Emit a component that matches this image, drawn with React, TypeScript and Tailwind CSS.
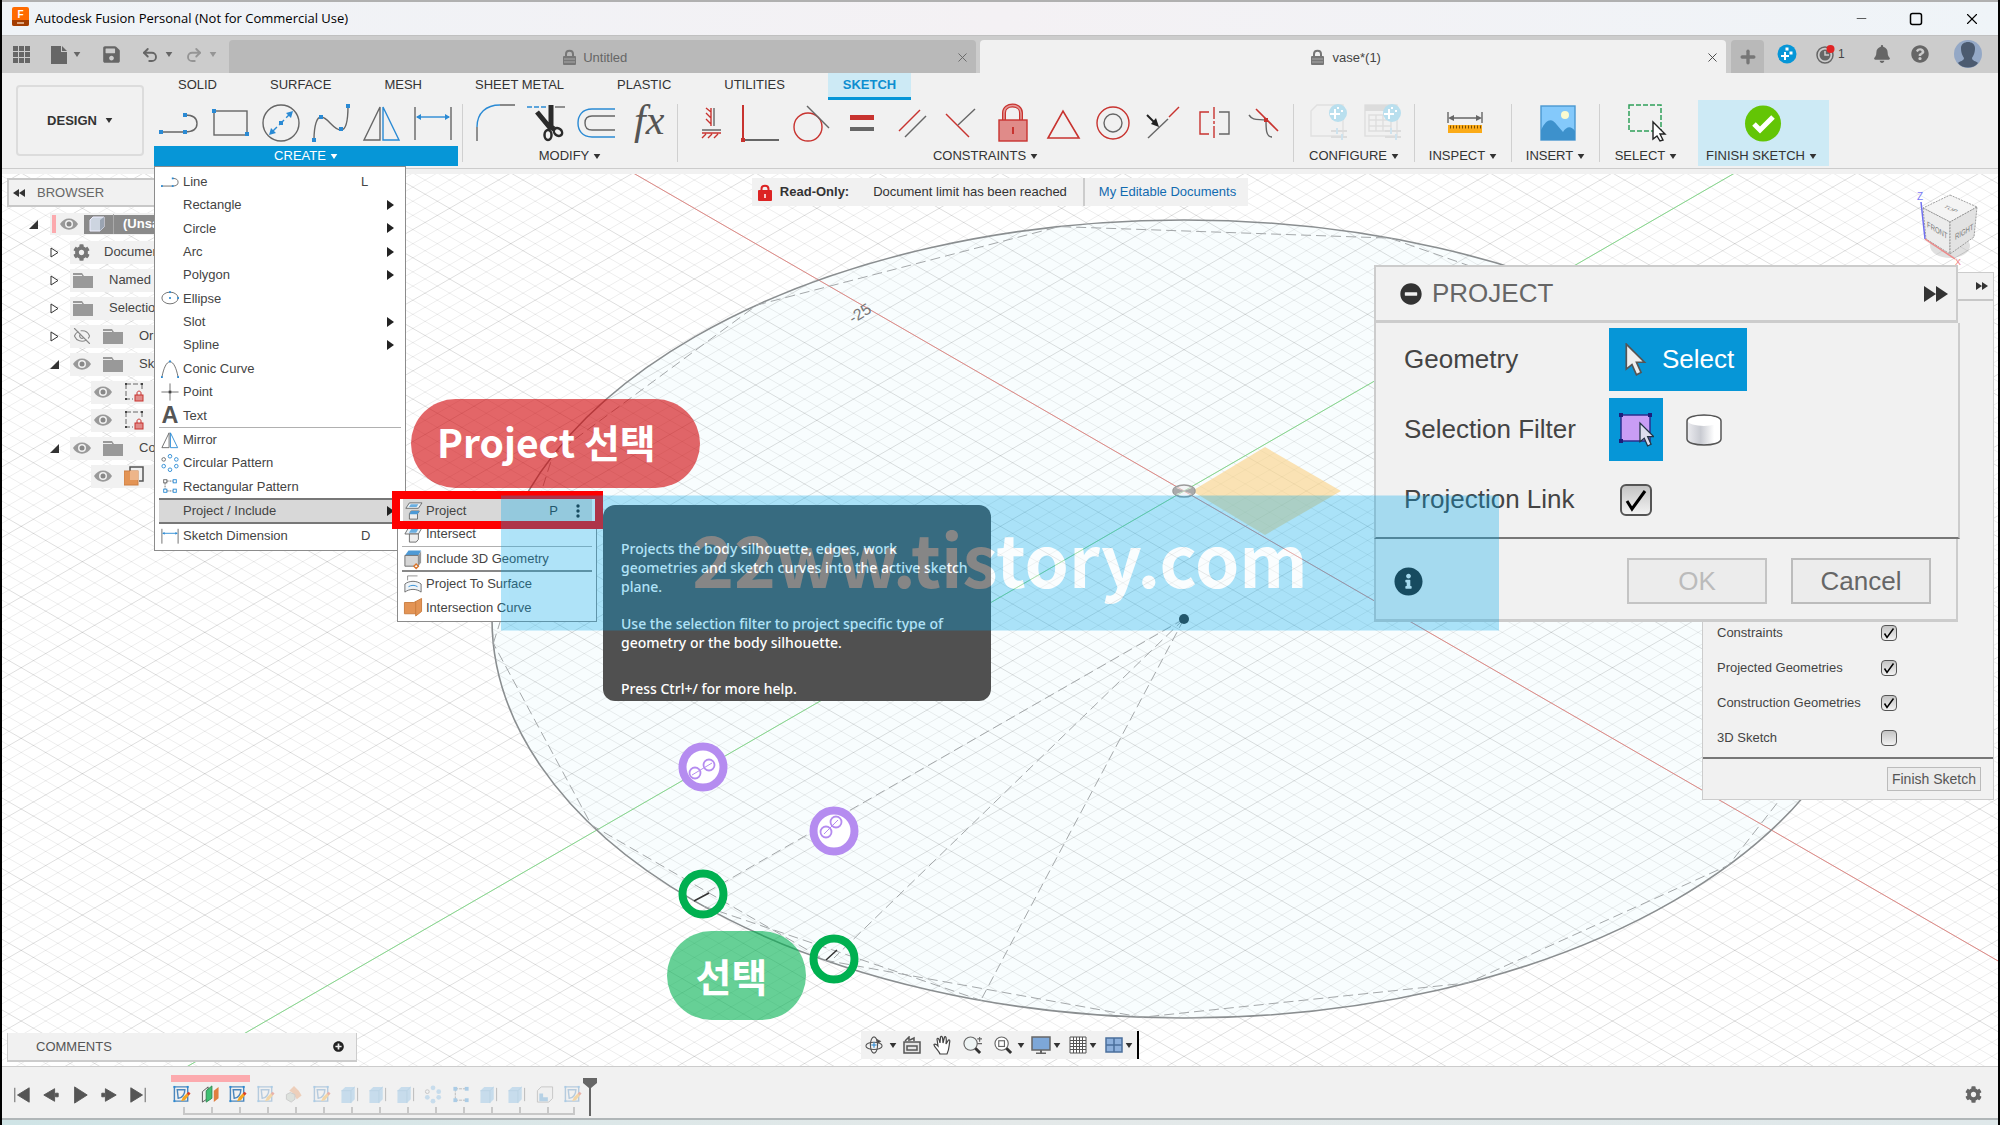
import { ReactNode } from "react";
import { Check, EyeOff, Minus, Plus, Redo2, Undo2, X } from "lucide-react";
import { FaBell, FaCog, FaInfoCircle, FaMinusCircle, FaPlusCircle, FaQuestionCircle, FaSave } from "react-icons/fa";

const BLUE = "#2a8ad4";
const RED = "#c8332f";
const GRAY = "#666";

function Caret({ className = "" }: { className?: string }) {
  return (
    <svg viewBox="0 0 8 6" className={"h-[5px] w-[8px] shrink-0 " + className}>
      <path d="M0 0H8L4 6Z" fill="currentColor" />
    </svg>
  );
}

function FastForward({ className = "" }: { className?: string }) {
  return (
    <svg viewBox="0 0 24 16" className={className}>
      <path d="M0 0L12 8L0 16ZM12 0L24 8L12 16Z" fill="#333" />
    </svg>
  );
}

function Icon({ children }: { children: ReactNode }) {
  return (
    <svg viewBox="0 0 40 40" className="size-10 overflow-visible" fill="none" stroke={GRAY} strokeWidth="1.4">
      {children}
    </svg>
  );
}

function Dots({ points, color = BLUE, r = 2 }: { points: number[][]; color?: string; r?: number }) {
  return (
    <>
      {points.map(([x, y]) => (
        <rect key={x + "-" + y} x={x - r} y={y - r} width={r * 2} height={r * 2} fill={color} stroke="none" />
      ))}
    </>
  );
}

/* ---------- ribbon icons ---------- */

const LineIcon = (
  <>
    <path d="M2 29H26M26 12C34 12 38 15 38 20.500S34 29 26 29" />
    <Dots points={[[2, 29], [26, 29], [26, 12]]} />
  </>
);
const MirrorIcon = (
  <>
    <path d="M18 4V37H2Z" />
    <path d="M21 4V37H37Z" stroke={BLUE} />
  </>
);
const DimensionIcon = (
  <>
    <path d="M2 4V37M38 4V37" />
    <path d="M4 14H36" stroke={BLUE} />
    <path d="M3 14L8 11V17ZM37 14L32 11V17Z" fill={BLUE} stroke="none" />
  </>
);

const createIcons: ReactNode[] = [
  LineIcon,
  <>
    <rect x="4" y="8" width="33" height="24" />
    <Dots points={[[4, 8], [37, 31]]} />
  </>,
  <>
    <circle cx="20" cy="20" r="18" />
    <path d="M11 29L30 10" stroke={BLUE} strokeDasharray="7 3" />
    <path d="M8 32L10 25L15 30ZM32 8L30 15L25 10Z" fill={BLUE} stroke="none" />
    <Dots points={[[20, 20]]} />
  </>,
  <>
    <path d="M3 37C3 22 6 14 10 14C17 14 22 27 30 27C36 27 37 14 37 3" />
    <Dots points={[[3, 37], [10, 14], [30, 26], [37, 3]]} />
  </>,
  MirrorIcon,
  DimensionIcon,
];

const modifyIcons: ReactNode[] = [
  <>
    <path d="M1 24C1 10 10 2 24 2" stroke={BLUE} />
    <path d="M1 24V38M24 2H39" />
  </>,
  <>
    <path d="M0 4H20" stroke={BLUE} strokeDasharray="5 2" />
    <path d="M28 4H38" />
    <path d="M10 9L24 26M24 2V26" stroke="#2b2b2b" strokeWidth="5" />
    <path d="M22 23L27 26" stroke="#2b2b2b" strokeWidth="5" />
    <ellipse cx="21" cy="32" rx="3.500" ry="5" stroke="#2b2b2b" strokeWidth="2.500" />
    <ellipse cx="31" cy="29" rx="3.500" ry="4.500" transform="rotate(-50 31 29)" stroke="#2b2b2b" strokeWidth="2.500" />
  </>,
  <>
    <path d="M38 6H15C5 6 1 13 1 20S5 34 15 34H38" stroke={BLUE} />
    <path d="M38 13H15C10 13 8 16 8 20S10 27 15 27H38" />
  </>,
  <text x="6" y="31" fontFamily="Liberation Serif, serif" fontStyle="italic" fontSize="42" fill="#555" stroke="none">
    fx
  </text>,
];

const constraintIcons: ReactNode[] = [
  <>
    <path d="M23 5V23M11 27H30" />
    <path d="M20 5V23M11 30H30M20 9L15 5M20 15L15 10M20 21L15 16M11 35L15 31M17 35L21 31M23 35L27 31" stroke={RED} />
  </>,
  <>
    <path d="M2 2V36" stroke={RED} strokeWidth="2" />
    <path d="M4 37H38" strokeWidth="2" />
    <Dots points={[[2, 37]]} color={RED} />
  </>,
  <>
    <circle cx="16" cy="24" r="14" stroke={RED} />
    <path d="M15 3L37 25" />
  </>,
  <>
    <rect x="8" y="12" width="24" height="5" fill={RED} stroke="none" />
    <rect x="8" y="24" width="24" height="4" fill={GRAY} stroke="none" />
  </>,
  <>
    <path d="M7 28L28 7" stroke={RED} />
    <path d="M13 34L34 13" />
  </>,
  <>
    <path d="M4 11L27 34" stroke={RED} />
    <path d="M16 22L33 6" />
  </>,
  <>
    <path d="M11 18V10C11 0 28 0 28 10V18" stroke={RED} strokeWidth="4" />
    <path d="M11 18V10C11 0 28 0 28 10V18" stroke="#e59a98" strokeWidth="1.500" />
    <rect x="6" y="17" width="28" height="21" fill="#e08b89" stroke={RED} />
    <path d="M20 24V31" stroke={RED} strokeWidth="2" />
  </>,
  <path d="M5 35H36L20 8Z" stroke={RED} strokeWidth="1.600" />,
  <>
    <circle cx="20" cy="20" r="16" stroke={RED} />
    <circle cx="20" cy="20" r="9" />
  </>,
  <>
    <path d="M5 35L25 16" />
    <path d="M26 14L36 4" stroke={RED} />
    <path d="M4 12L12 20" stroke="#222" strokeWidth="2" />
    <path d="M16 24L8 21L13 15Z" fill="#222" stroke="none" />
  </>,
  <>
    <path d="M15 9H6V31H15" stroke={RED} />
    <path d="M25 9H35V31H25" />
    <path d="M20 4V36" stroke={RED} strokeDasharray="12 2 3 2" />
  </>,
  <>
    <path d="M5 12C9 18 13 16 22 17C22 26 22 34 28 34" />
    <path d="M12 6L34 28" stroke={RED} strokeWidth="1.600" />
    <Dots points={[[22, 17]]} color={RED} />
  </>,
];

const badge = (
  <>
    <circle cx="29" cy="10" r="9" fill="#b9dfee" stroke="none" />
    <path d="M26 6V16M21 11H31" stroke="#fff" strokeWidth="2" />
    <Dots points={[[29, 5], [33, 8]]} color="#fff" r={1} />
    <path d="M22 28H38M22 34H38" stroke="#dcdcdc" strokeWidth="2" />
    <path d="M28 25V31M33 31V37" stroke="#cfe3ee" strokeWidth="2" />
  </>
);
const configureIcons: ReactNode[] = [
  <>
    <path d="M2 8L8 2H34V33H2Z" stroke="#e0e0e0" />
    {badge}
  </>,
  <>
    <rect x="2" y="2" width="32" height="31" stroke="#dedede" />
    <path d="M2 5H34" stroke="#dcdcdc" strokeWidth="6" />
    <path d="M6 12H28V28H6ZM6 17H28M6 23H28M13 12V28M20 12V28" stroke="#dedede" />
    {badge}
  </>,
];

const inspectIcon = (
  <>
    <path d="M3 9V20M37 9V20M5 15H35" />
    <path d="M3 15L9 12V18ZM37 15L31 12V18Z" fill={GRAY} stroke="none" />
    <rect x="3" y="22" width="34" height="8" fill="#fbab18" stroke="none" />
    <path d="M5 24H36" stroke="#7a4d00" strokeWidth="3" strokeDasharray="1 2" />
  </>
);
const insertIcon = (
  <>
    <rect x="3" y="3" width="34" height="34" fill="#84c9fb" stroke="#4a98d0" />
    <path d="M3 27C9 15 14 15 19 22L25 29C29 23 33 23 37 28V37H3Z" fill="#3d91cc" stroke="none" />
    <circle cx="27" cy="12" r="4" fill="#fbfbd0" stroke="none" />
  </>
);
const selectIcon = (
  <>
    <rect x="1" y="2" width="32" height="26" stroke="#2fa05a" strokeWidth="1.500" strokeDasharray="5 2" />
    <path d="M25 19V36L29 33L32 38L35 37L32 31H37Z" fill="#fff" stroke="#222" />
  </>
);
const finishIcon = (
  <>
    <circle cx="19" cy="20.500" r="18" fill="#63c505" stroke="none" />
    <path d="M10 21L16 27L29 14" stroke="#fff" strokeWidth="5" />
  </>
);

/* ---------- ribbon ---------- */

function ToolGroup({ label, width, icons, active }: { label: string; width: string; icons: ReactNode[]; active?: boolean }) {
  return (
    <div className={"flex flex-col pt-[3px] " + width}>
      <div className="flex justify-around">
        {icons.map((icon, i) => (
          <button key={i} aria-label={label + " tool " + (i + 1)}>
            <Icon>{icon}</Icon>
          </button>
        ))}
      </div>
      <button
        className={
          "mt-[3px] flex h-5 items-center justify-center gap-1 whitespace-nowrap " +
          (active ? "bg-[#0696d7] text-white" : "pr-1 text-[#333]")
        }
      >
        {label}
        <Caret />
      </button>
    </div>
  );
}

function Divider() {
  return <div className="mt-1 mr-2 mb-1 ml-1 w-px bg-[#d0d0d0]" />;
}

const tabs = ["SOLID", "SURFACE", "MESH", "SHEET METAL", "PLASTIC", "UTILITIES"];

function Ribbon() {
  return (
    <div className="relative z-20 flex h-[96px] border-b border-[#ccc] bg-[#f1f1f1] text-[#333]">
      <button className="mt-3 ml-[14px] flex h-[71px] w-32 shrink-0 items-center justify-center gap-2 rounded border-2 border-[#dcdcdc] font-bold">
        DESIGN <Caret />
      </button>
      <div className="ml-2.5 flex flex-col">
        <div className="flex h-[27px] items-start pl-6 text-[13px]">
          {tabs.map((t) => (
            <button key={t} className="mr-[53px] h-6 whitespace-nowrap">
              {t}
            </button>
          ))}
          <button className="-ml-2.5 h-[27px] w-[83px] border-b-[3px] border-[#0696d7] bg-[#cdeaf5] font-bold text-[#0d8ed0]">
            SKETCH
          </button>
        </div>
        <div className="flex">
          <div className="relative">
            <ToolGroup label="CREATE" width="w-[304px]" icons={createIcons} active />
            <CreateMenu />
          </div>
          <Divider />
          <ToolGroup label="MODIFY" width="w-[202px]" icons={modifyIcons} />
          <Divider />
          <ToolGroup label="CONSTRAINTS" width="w-[603px]" icons={constraintIcons} />
          <Divider />
          <ToolGroup label="CONFIGURE" width="w-[108px]" icons={configureIcons} />
          <Divider />
          <ToolGroup label="INSPECT" width="w-[84px]" icons={[inspectIcon]} />
          <Divider />
          <ToolGroup label="INSERT" width="w-[75px]" icons={[insertIcon]} />
          <Divider />
          <ToolGroup label="SELECT" width="w-20" icons={[selectIcon]} />
          <div className="ml-2.5 bg-[#cdeaf5]">
            <ToolGroup label="FINISH SKETCH" width="w-[131px]" icons={[finishIcon]} />
          </div>
        </div>
      </div>
    </div>
  );
}

/* ---------- create menu ---------- */

type Item = { label: string; icon?: ReactNode; sub?: boolean };

const drawItems: Item[] = [
  { label: "Line", icon: LineIcon },
  { label: "Rectangle", sub: true },
  { label: "Circle", sub: true },
  { label: "Arc", sub: true },
  { label: "Polygon", sub: true },
  {
    label: "Ellipse",
    icon: (
      <>
        <ellipse cx="20" cy="20" rx="18" ry="13" strokeWidth="2" />
        <Dots points={[[20, 20], [20, 7], [38, 20]]} r={2} />
      </>
    ),
  },
  { label: "Slot", sub: true },
  { label: "Spline", sub: true },
  {
    label: "Conic Curve",
    icon: (
      <>
        <path d="M2 38C6 18 12 4 20 4S34 18 38 38" strokeWidth="2" />
        <Dots points={[[20, 3], [2, 38], [38, 38]]} r={2} />
      </>
    ),
  },
  {
    label: "Point",
    icon: (
      <>
        <path d="M20 1V39M1 20H39" strokeWidth="2" />
        <Dots points={[[20, 20]]} color="#444" r={3} />
      </>
    ),
  },
  {
    label: "Text",
    icon: (
      <text x="20" y="38" textAnchor="middle" fontFamily="Liberation Sans, sans-serif" fontWeight="bold" fontSize="52" fill="#555" stroke="none">
        A
      </text>
    ),
  },
];

const patternItems: Item[] = [
  { label: "Mirror", icon: <g strokeWidth="2">{MirrorIcon}</g> },
  {
    label: "Circular Pattern",
    icon: (
      <g stroke={BLUE} strokeWidth="2">
        <ellipse cx="20" cy="5" rx="4" ry="4" />
        <circle cx="34" cy="12" r="4" />
        <circle cx="34" cy="27" r="4" />
        <circle cx="20" cy="35" r="4" />
        <circle cx="6" cy="27" r="4" />
        <circle cx="6" cy="12" r="4" stroke={GRAY} />
      </g>
    ),
  },
  {
    label: "Rectangular Pattern",
    icon: (
      <g strokeWidth="2" stroke={BLUE}>
        <path d="M13 9H27M9 13V27M13 31H27" stroke={GRAY} strokeDasharray="4 2" />
        <rect x="6" y="6" width="7" height="7" stroke={GRAY} />
        <rect x="27" y="6" width="7" height="7" />
        <rect x="6" y="27" width="7" height="7" />
        <rect x="27" y="27" width="7" height="7" />
      </g>
    ),
  },
];

function MenuIcon({ children }: { children?: ReactNode }) {
  return (
    <svg viewBox="0 0 40 40" className="size-[18px] shrink-0 overflow-visible" fill="none" stroke={GRAY} strokeWidth="2">
      {children}
    </svg>
  );
}

function MenuRow({ item, shortcut }: { item: Item; shortcut?: string }) {
  return (
    <button className="flex flex-1 items-center gap-1 pr-[11px] pl-1.5 text-left">
      <MenuIcon>{item.icon}</MenuIcon>
      <span className="flex-1 whitespace-nowrap">{item.label}</span>
      {shortcut && <span className="w-[33px]">{shortcut}</span>}
      {item.sub && (
        <svg viewBox="0 0 7 10" className="h-2.5 w-[7px]">
          <path d="M0 0L7 5L0 10Z" fill="#222" />
        </svg>
      )}
    </button>
  );
}

const projectIcon = (
  <>
    <path d="M12 2H40L32 14H4Z" fill="#eef3f7" />
    <path d="M15 5H32L28 11H11Z" fill="#6aaee0" stroke="none" />
    <path d="M16 20H34L30 26V38H12V26Z" fill="#eee" />
    <path d="M16 20H34L30 27H12Z" fill="#4d9ad6" stroke="none" />
  </>
);
const intersectIcon = (
  <>
    <path d="M10 6H40L32 20H2Z" fill="#eef3f7" />
    <path d="M16 9H32L27 17H11Z" fill="#6aaee0" stroke="none" />
    <path d="M12 20H32V32L27 38H12Z" fill="#eee" />
  </>
);
const includeIcon = (
  <>
    <path d="M2 12L10 1H38L32 12Z" fill="#4d9ad6" stroke="none" />
    <path d="M2 12H32V36H2Z" fill="#d6d6d6" />
    <path d="M32 12L38 2V28L32 36Z" fill="#999" stroke="none" />
    <path d="M27 31L32 36L27 41L22 36Z" fill="#fff" stroke="#d9742b" strokeWidth="3" />
  </>
);
const surfaceIcon = (
  <>
    <path d="M8 12V2H30" strokeWidth="1.500" />
    <path d="M2 20C12 12 28 12 38 20V38C28 30 12 30 2 38Z" fill="#eef3f7" />
    <path d="M10 26C16 22 24 22 30 26" stroke={BLUE} />
  </>
);
const curveIcon = <path d="M1 10H22L39 1V30L26 40V35H1ZM26 8V36" fill="#e39455" stroke="#c87a3c" />;

function CreateMenu() {
  return (
    <div className="absolute top-full left-0 flex w-[252px] flex-col border border-[#8c8c8c] bg-white pt-[3px] pb-0.5 text-[13px] text-[#444]">
      <div className="flex h-[257px] flex-col">
        {drawItems.map((item, i) => (
          <MenuRow key={item.label} item={item} shortcut={i === 0 ? "L" : undefined} />
        ))}
      </div>
      <div className="mx-1 h-px bg-[#b0b0b0]" />
      <div className="flex h-[70px] flex-col">
        {patternItems.map((item) => (
          <MenuRow key={item.label} item={item} />
        ))}
      </div>
      <div className="relative ml-1 flex h-[26px] border-y-2 border-[#777] bg-[#d8d8d8]">
        <button className="flex flex-1 items-center justify-between pr-[11px] pl-6 text-left">
          Project / Include
          <svg viewBox="0 0 7 10" className="h-2.5 w-[7px]">
            <path d="M0 0L7 5L0 10Z" fill="#222" />
          </svg>
        </button>
        <ProjectSubmenu />
      </div>
      <div className="flex h-6 flex-col">
        <MenuRow item={{ label: "Sketch Dimension", icon: DimensionIcon }} shortcut="D" />
      </div>
    </div>
  );
}

function ProjectSubmenu() {
  return (
    <div className="absolute -top-1.5 left-[238px] flex w-[200px] flex-col border border-[#8c8c8c] bg-white pt-1 pb-0.5">
      <div className="mr-1 ml-[5px] flex h-[23px] items-center gap-1 bg-[#d8d8d8] pl-px">
        <MenuIcon>{projectIcon}</MenuIcon>
        <span className="flex-1">Project</span>
        <span className="text-[#333]">P</span>
        <svg viewBox="0 0 4 14" className="mr-3 ml-3.5 h-3.5 w-1" fill="#222">
          <circle cx="2" cy="2" r="1.700" />
          <circle cx="2" cy="7" r="1.700" />
          <circle cx="2" cy="12" r="1.700" />
        </svg>
      </div>
      <div className="flex h-6 flex-col">
        <MenuRow item={{ label: "Intersect", icon: intersectIcon }} />
      </div>
      <div className="mx-1 h-px bg-[#b0b0b0]" />
      <div className="flex h-[23px] flex-col">
        <MenuRow item={{ label: "Include 3D Geometry", icon: includeIcon }} />
      </div>
      <div className="mx-1 h-0.5 bg-[#888]" />
      <div className="flex h-[47px] flex-col">
        <MenuRow item={{ label: "Project To Surface", icon: surfaceIcon }} />
        <MenuRow item={{ label: "Intersection Curve", icon: curveIcon }} />
      </div>
      <div className="absolute -top-1 -left-1.5 h-[38px] w-[211px] border-8 border-[#fe0000]" />
    </div>
  );
}

/* ---------- title bar and document tabs ---------- */

function TitleBar() {
  return (
    <div className="flex h-[33px] items-center bg-gradient-to-r from-[#eff3f7] via-[#f4f1f4] to-[#eff4f8] text-black">
      <svg viewBox="0 0 17 19" className="-mt-1 mr-1.5 ml-2.5 h-[19px] w-[17px]">
        <rect width="17" height="19" rx="2" fill="#ff6b00" />
        <path d="M0 13H17V17A2 2 0 0 1 15 19H2A2 2 0 0 1 0 17Z" fill="#a33c00" />
        <text x="5.500" y="11" fontSize="10" fontWeight="bold" fill="#fff" fontFamily="Liberation Sans, sans-serif">
          F
        </text>
        <path d="M5 16H12" stroke="#f0c9a8" strokeWidth="1.500" />
      </svg>
      <h1 className="flex-1 font-['Open_Sans',sans-serif] text-[13px]">Autodesk Fusion Personal (Not for Commercial Use)</h1>
      <button aria-label="Minimize" className="mr-10">
        <Minus size={15} strokeWidth={1} />
      </button>
      <button aria-label="Maximize" className="mr-10">
        <svg viewBox="0 0 14 14" className="size-3.5">
          <rect x="1.500" y="1.500" width="11" height="11" rx="2" fill="none" stroke="#000" strokeWidth="1.500" />
        </svg>
      </button>
      <button aria-label="Close window" className="mr-[17px]">
        <X size={18} strokeWidth={1.5} />
      </button>
    </div>
  );
}

function TabLock() {
  return (
    <svg viewBox="0 0 15 17" className="h-[17px] w-[15px]">
      <path d="M4 8V5C4 0.500 11 0.500 11 5V8" fill="none" stroke="#777" strokeWidth="2" />
      <rect x="1" y="7" width="13" height="9" rx="1" fill="#777" />
      <path d="M2 10H13M2 13H13" stroke="#aaa" />
    </svg>
  );
}

function DocumentBar() {
  return (
    <div className="flex h-[38px] items-end border-t border-[#c0c0c0] bg-[#ccc] text-[#666]">
      <div className="flex h-[37px] w-[227px] shrink-0 items-center pl-[11px]">
        <button aria-label="Data panel">
          <svg viewBox="0 0 17 17" className="size-[17px]" fill="currentColor">
            <path d="M0 0H5V5H0ZM6 0H11V5H6ZM12 0H17V5H12ZM0 6H5V11H0ZM6 6H11V11H6ZM12 6H17V11H12ZM0 12H5V17H0ZM6 12H11V17H6ZM12 12H17V17H12Z" />
          </svg>
        </button>
        <button aria-label="File" className="ml-[21px] flex items-center gap-1.5">
          <svg viewBox="0 0 16 18" className="h-[18px] w-4" fill="currentColor">
            <path d="M0 0H10V6H16V18H0ZM11 0L16 5H11Z" />
          </svg>
          <Caret />
        </button>
        <button aria-label="Save" className="ml-[21px]">
          <FaSave size={19} />
        </button>
        <button aria-label="Undo" className="ml-5 flex items-center gap-1.5">
          <Undo2 size={18} strokeWidth={2.5} />
          <Caret />
        </button>
        <button aria-label="Redo" className="ml-3 flex items-center gap-1.5 text-[#959595]">
          <Redo2 size={18} strokeWidth={2.5} />
          <Caret />
        </button>
      </div>
      <div className="mr-1 flex h-[33px] flex-1 items-center rounded-t bg-[#b9b9b9] pt-0.5 pr-1.5">
        <span className="flex flex-1 items-center justify-center gap-1.5 pl-1.5">
          <TabLock /> Untitled
        </span>
        <button aria-label="Close Untitled">
          <X size={15} strokeWidth={1.5} />
        </button>
      </div>
      <div className="mr-[5px] flex h-[33px] flex-1 items-center rounded-t bg-[#f1f1f1] pt-0.5 pr-1.5 text-[#444]">
        <span className="flex flex-1 items-center justify-center gap-2 pl-1.5">
          <TabLock /> vase*(1)
        </span>
        <button aria-label="Close vase">
          <X size={15} strokeWidth={1.5} />
        </button>
      </div>
      <button aria-label="New tab" className="flex h-[33px] w-[33px] items-center justify-center rounded-t bg-[#b9b9b9] text-[#777]">
        <Plus size={20} strokeWidth={4} />
      </button>
      <div className="flex h-[37px] w-[234px] items-center pb-0.5 pl-[13px]">
        <svg viewBox="0 0 20 20" className="size-5">
          <circle cx="10" cy="10" r="9.500" fill="#0696d7" />
          <path d="M8 8V16M4 12H12" stroke="#fff" strokeWidth="2" />
          <Dots points={[[10, 5], [14, 9]]} color="#fff" r={1.5} />
        </svg>
        <svg viewBox="0 0 20 20" className="ml-[19px] size-5">
          <circle cx="9" cy="11" r="8" fill="none" stroke="#666" strokeWidth="1.500" />
          <circle cx="9" cy="11" r="5.500" fill="#666" />
          <path d="M9 7V11H13" stroke="#ccc" strokeWidth="1.500" fill="none" />
          <circle cx="14.500" cy="5" r="4" fill="#e02424" />
        </svg>
        <span className="ml-0.5 text-xs text-[#444]">1</span>
        <FaBell size={18} className="ml-7" />
        <FaQuestionCircle size={18} className="ml-5" />
        <svg viewBox="0 0 28 28" className="ml-[25px] size-7">
          <circle cx="14" cy="14" r="14" fill="#94a8c6" />
          <path d="M7 8C7 0 21 0 21 8C21 14 19 16 18 18C18 21 22 21 24 23C20 29 8 29 4 23C6 21 10 21 10 18C9 16 7 14 7 8Z" fill="#4c5b70" />
        </svg>
      </div>
    </div>
  );
}

/* ---------- modelling canvas ---------- */

const OX = 1184;
const OY = 491;

// isometric lines through the origin, one every `step` pixels sideways
function gridPath(step: number, skip: number) {
  let d = "";
  for (let i = -160; i <= 160; i++) {
    if (skip && i % skip === 0) continue;
    const x = OX + i * step;
    d += `M${x - 1300} ${OY - 750.6}L${x + 1300} ${OY + 750.6}M${x - 1300} ${OY + 750.6}L${x + 1300} ${OY - 750.6}`;
  }
  return d;
}

function onCircle(deg: number) {
  const t = (deg * Math.PI) / 180;
  return `${(1184 + 692 * Math.cos(t)).toFixed(1)} ${(619 + 399 * Math.sin(t)).toFixed(1)}`;
}

const polygon = Array.from({ length: 13 }, (_, i) => onCircle(176.5 + i * 27.7)).join("L");

function Drawing() {
  return (
    <svg viewBox="2 174 1996 892" preserveAspectRatio="xMidYMid slice" className="absolute inset-0 h-full w-full" fill="none">
      <rect x="0" y="173" width="2000" height="893" fill="#fff" />
      <ellipse cx="1184" cy="619" rx="692" ry="399" fill="#f8fdfe" />
      <path d={gridPath(24.48, 5)} stroke="#000" strokeOpacity="0.07" />
      <path d={gridPath(122.4, 0)} stroke="#000" strokeOpacity="0.13" />
      <path d="M284 -28.600L2284 1126" stroke="#e08a86" />
      <path d="M184 1068.400L2084 -28.600" stroke="#86d98c" />
      <ellipse cx="1184" cy="619" rx="692" ry="399" stroke="#8a8e90" strokeWidth="1.600" />
      <g stroke="#a4a8aa" strokeDasharray="10 5">
        <path d={`M${polygon}Z`} />
        <path d={`M${onCircle(134)}L${onCircle(107)}`} />
        <path d={`M1184 619L702 895M1184 619L834 958M1184 619L982 998`} />
      </g>
      <path d="M1192 491L1265 447L1341 491L1265 535Z" fill="#fbd48c" fillOpacity="0.65" />
      <ellipse cx="1184" cy="491" rx="11" ry="6" fill="#eee" fillOpacity="0.5" stroke="#9a9a9a" strokeWidth="1.500" />
      <path d="M1184 491L1174 487V495ZM1184 491L1194 487V495Z" fill="#aaa" />
      <circle cx="1184" cy="619" r="5" fill="#333" />
      <text x="853" y="324" transform="rotate(-32 853 324)" fontSize="16" fill="#777" fontFamily="Liberation Sans, sans-serif">
        -25
      </text>
      <g strokeWidth="8">
        <g stroke="#b58cf0">
          <circle cx="703" cy="767" r="20.500" fill="#fff" />
          <circle cx="834" cy="831" r="20.500" fill="#fff" />
        </g>
        <g stroke="#00b050">
          <circle cx="703" cy="894" r="20.500" />
          <circle cx="834" cy="959" r="20.500" />
        </g>
      </g>
      <g stroke="#b58cf0" strokeWidth="1.800">
        <circle cx="695" cy="773" r="5.500" />
        <circle cx="709" cy="765" r="5.500" />
        <circle cx="826" cy="832" r="5.500" />
        <circle cx="836" cy="822" r="5.500" />
        <path d="M692 775L712 763M824 834L838 820" strokeWidth="1" />
      </g>
      <path d="M694 901L709 893M826 960L837 950" stroke="#333" strokeWidth="1.500" />
    </svg>
  );
}

function Eye() {
  return (
    <svg viewBox="0 0 18 12" className="h-3 w-[18px] shrink-0">
      <path d="M0 6C4 -1.500 14 -1.500 18 6C14 13.500 4 13.500 0 6Z" fill="#999" />
      <circle cx="9" cy="6" r="4" fill="#f1f1f1" />
      <circle cx="9" cy="6" r="2.500" fill="#888" />
    </svg>
  );
}

function Folder() {
  return (
    <svg viewBox="0 0 20 16" className="h-4 w-5 shrink-0" fill="#999">
      <path d="M0 1H9L11 4H20V16H0Z" />
      <path d="M0 3.500H9" stroke="#eee" />
    </svg>
  );
}

function Twisty({ open }: { open?: boolean }) {
  return (
    <svg viewBox="0 0 9 11" className="h-[11px] w-[9px] shrink-0">
      {open ? <path d="M9 1V10H0Z" fill="#333" /> : <path d="M1 1L8 5.500L1 10Z" fill="#fff" stroke="#333" />}
    </svg>
  );
}

const sketchLock = (
  <svg viewBox="0 0 20 20" className="size-5 shrink-0" fill="none" stroke="#666">
    <path d="M2 2H18M2 2V17H9M18 2V9" strokeDasharray="5 2" />
    <path d="M13 13V11C13 8.500 17 8.500 17 11V13" stroke={RED} />
    <rect x="11" y="13" width="8" height="6" fill="#e08b89" stroke={RED} />
    <Dots points={[[2, 2], [18, 2], [2, 17]]} color="#444" r={1} />
  </svg>
);

const planeIcon = (
  <svg viewBox="0 0 20 20" className="size-5 shrink-0">
    <path d="M6 5V1H19V15H15" fill="none" stroke="#555" strokeWidth="1.500" />
    <rect x="0" y="5" width="14" height="14" fill="#e39455" stroke="#cd7f42" />
    <rect x="6" y="5" width="8" height="9" fill="#edb58a" />
  </svg>
);

function TreeRow({ indent, twisty, children }: { indent: string; twisty?: ReactNode; children: ReactNode }) {
  return (
    <li className="flex h-7 items-center pl-[43px]">
      <span className="flex w-[9px] justify-center">{twisty}</span>
      <div className={"flex h-[23px] flex-1 items-center gap-3 bg-[#f1f1f1] pl-[3px] " + indent}>{children}</div>
    </li>
  );
}

function Browser() {
  return (
    <div className="mt-1 ml-[5px] w-[350px] text-[#444]">
      <div className="flex h-[29px] items-center border-2 border-[#c8c8c8] bg-[#f1f1f1] pl-1 text-[#666]">
        <FastForward className="mr-3 h-2 w-3 rotate-180" />
        BROWSER
      </div>
      <ul className="mt-[3px]">
        <li className="flex h-7 items-center pl-[22px]">
          <Twisty open />
          <div className="ml-3 flex h-[22px] flex-1 items-center bg-[#f1f1f1] pl-0.5">
            <span className="mr-1 h-[18px] w-1 bg-[#fcaaae]" />
            <Eye />
            <div className="ml-1.5 flex h-[19px] flex-1 items-center bg-[#8a8a8a] pl-[5px] font-bold text-white">
              <svg viewBox="0 0 16 16" className="mr-2 size-4">
                <path d="M1 4L4 1H15V11L11 15H1Z" fill="#cdd5e0" stroke="#eef" />
                <path d="M11 4V15L15 11V1Z" fill="#9aa4b2" />
              </svg>
              <span className="border-l border-[#aaa] pl-[9px]">(Unsaved)</span>
            </div>
          </div>
        </li>
        <TreeRow twisty={<Twisty />} indent="ml-[11px]">
          <FaCog size={17} color="#777" /> <span className="pl-0.5">Document Settings</span>
        </TreeRow>
        <TreeRow twisty={<Twisty />} indent="ml-[11px]">
          <Folder /> <span className="pl-1">Named Views</span>
        </TreeRow>
        <TreeRow twisty={<Twisty />} indent="ml-[11px]">
          <Folder /> <span className="pl-1">Selection Sets</span>
        </TreeRow>
        <TreeRow twisty={<Twisty />} indent="ml-[11px]">
          <EyeOff size={18} color="#888" strokeWidth={1.5} /> <Folder /> <span className="pl-1">Origin</span>
        </TreeRow>
        <TreeRow twisty={<Twisty open />} indent="ml-[11px]">
          <Eye /> <Folder /> <span className="pl-1">Sketches</span>
        </TreeRow>
        <TreeRow indent="ml-8">
          <Eye /> {sketchLock} <span className="pl-1">Sketch1</span>
        </TreeRow>
        <TreeRow indent="ml-8">
          <Eye /> {sketchLock} <span className="pl-1">Sketch2</span>
        </TreeRow>
        <TreeRow twisty={<Twisty open />} indent="ml-[11px]">
          <Eye /> <Folder /> <span className="pl-1">Construction</span>
        </TreeRow>
        <TreeRow indent="ml-8">
          <Eye /> {planeIcon} <span className="pl-1">Plane1</span>
        </TreeRow>
      </ul>
    </div>
  );
}

function ViewCube() {
  return (
    <svg viewBox="1910 180 80 85" className="mr-2 ml-auto h-[85px] w-20" fontFamily="Liberation Sans, sans-serif">
      <ellipse cx="1950" cy="245" rx="20" ry="12" fill="#000" fillOpacity="0.12" />
      <g stroke="#888" strokeDasharray="2 1" strokeWidth="0.800">
        <path d="M1950 194L1977 206L1950 221L1923 207Z" fill="#f4f4f4" />
        <path d="M1923 207L1950 221V253L1926 238Z" fill="#ececec" />
        <path d="M1977 206L1950 221V253L1974 236Z" fill="#e2e2e2" />
      </g>
      <path d="M1921 201L1925 238" stroke="#6f6ff0" strokeWidth="1.500" />
      <path d="M1925 238L1955 258" stroke="#e88" strokeWidth="1.500" />
      <g fill="#777" fontSize="7">
        <text transform="matrix(.85 .5 0 1.200 1927 226)">FRONT</text>
        <text transform="matrix(.85 -.5 0 1.200 1955 239)">RIGHT</text>
        <text transform="matrix(.85 .4 -.7 .4 1943 206)">TOP</text>
      </g>
      <text x="1917" y="199" fontSize="10" fill="#7a7af5">Z</text>
      <text x="1955" y="264" fontSize="9" fill="#f08080">X</text>
    </svg>
  );
}

function Tick({ label, checked, size }: { label: string; checked?: boolean; size: "sm" | "lg" }) {
  const lg = size === "lg";
  return (
    <span className={"relative flex " + (lg ? "size-8" : "size-4")}>
      <input
        type="checkbox"
        id={label}
        defaultChecked={checked}
        className={
          "peer appearance-none border-[#555] bg-gradient-to-b from-[#c4c4c4] to-[#f2f2f2] " +
          (lg ? "size-8 rounded-md border-2" : "size-4 rounded-sm border")
        }
      />
      <svg viewBox="0 0 32 32" className="pointer-events-none absolute inset-0 hidden peer-checked:block">
        <path d="M7 17L12 25L25 7" fill="none" stroke="#000" strokeWidth="3" />
      </svg>
    </span>
  );
}

const paletteRows = [
  { label: "Constraints", checked: true },
  { label: "Projected Geometries", checked: true },
  { label: "Construction Geometries", checked: true },
  { label: "3D Sketch", checked: false },
];

function SketchPalette() {
  return (
    <div className="mr-1 w-[292px] border border-[#ccc] bg-[#f1f1f1] text-[#444]">
      <div className="flex h-7 items-center justify-end border-b-2 border-[#c8c8c8] pr-[5px]">
        <FastForward className="h-2 w-3" />
      </div>
      <div className="flex h-[458px] flex-col justify-end border-b-2 border-[#777] pb-0.5">
        {paletteRows.map((row) => (
          <div key={row.label} className="flex h-[35px] items-center pl-3.5">
            <label htmlFor={row.label} className="w-[164px]">
              {row.label}
            </label>
            <Tick label={row.label} checked={row.checked} size="sm" />
          </div>
        ))}
      </div>
      <div className="flex h-10 items-center justify-end pr-3">
        <button className="h-6 border border-[#bbb] bg-[#ececec] px-1 text-sm text-[#555]">Finish Sketch</button>
      </div>
    </div>
  );
}

const cursor = "M0 0V22L5 18L9 27L13 25L9 16H16Z";

function ProjectPanel() {
  return (
    <section className="absolute top-[91px] right-[38px] w-[586px] text-[26px] text-[#444]">
      <header className="mr-0.5 flex h-[58px] items-center border-2 border-b-[3px] border-[#ccc] bg-[#f1f1f1] pr-2 pl-6 text-[#666]">
        <FaMinusCircle size={22} color="#333" />
        <h2 className="flex-1 pl-2.5">PROJECT</h2>
        <FastForward className="h-4 w-6" />
      </header>
      <div className="grid h-[216px] grid-cols-[205px_1fr] content-start gap-y-[7px] border-x-2 border-b-2 border-x-[#ccc] border-b-[#777] bg-[#f1f1f1] pt-[5px] pl-7">
        <span className="self-center">Geometry</span>
        <button className="flex h-[63px] w-[138px] items-center bg-[#0696d7] pl-4 text-white">
          <svg viewBox="-1 -1 20 30" className="mr-3.5 h-[34px] w-[23px]">
            <path d={cursor} fill="#eee" stroke="#555" strokeWidth="1.500" />
          </svg>
          Select
        </button>
        <span className="self-center whitespace-nowrap">Selection Filter</span>
        <div className="flex items-center gap-[22px]">
          <button aria-label="Specified entities" className="flex h-[63px] w-[54px] items-center justify-center bg-[#0696d7]">
            <svg viewBox="0 0 36 36" className="size-9">
              <rect x="3" y="3" width="29" height="26" fill="#c99df5" stroke="#2b2f8f" strokeWidth="1.500" />
              <path d={cursor} transform="translate(22 11) scale(.85)" fill="#dde" stroke="#234" strokeWidth="1.500" />
              <Dots points={[[3, 3], [32, 3], [3, 29]]} color="#1d1d7a" />
            </svg>
          </button>
          <button aria-label="Bodies">
            <svg viewBox="0 0 38 36" className="h-9 w-[38px]">
              <defs>
                <linearGradient id="body">
                  <stop offset="0" stopColor="#ececf0" />
                  <stop offset="0.400" stopColor="#c9cbd2" />
                  <stop offset="0.800" stopColor="#fff" />
                </linearGradient>
              </defs>
              <path d="M2 9C2 1 36 1 36 9V27C36 35 2 35 2 27Z" fill="url(#body)" stroke="#555" strokeWidth="1.500" />
              <ellipse cx="19" cy="9" rx="16" ry="5" fill="#fff" />
            </svg>
          </button>
        </div>
        <label htmlFor="Projection Link" className="self-center whitespace-nowrap">
          Projection Link
        </label>
        <div className="flex h-[63px] items-center pl-[11px]">
          <Tick label="Projection Link" checked size="lg" />
        </div>
      </div>
      <footer className="mr-0.5 flex h-[83px] items-center border-x-2 border-b-[3px] border-[#ccc] bg-[#f1f1f1] pt-1 pr-[25px] pl-[18px]">
        <FaInfoCircle size={29} color="#222" />
        <button disabled className="mr-6 ml-auto h-[46px] w-[140px] border-2 border-[#c4c4c4] bg-[#ececec] text-[#bbb]">
          OK
        </button>
        <button className="h-[46px] w-[140px] border-2 border-[#bcbcbc] bg-[#ececec] text-[#666]">Cancel</button>
      </footer>
    </section>
  );
}

function NavBar() {
  return (
    <div className="mb-[3px] flex h-7 items-center border-r-2 border-black bg-[#f1f1f1] pl-1 text-[#333]">
      <svg viewBox="0 0 20 20" className="size-[18px]" fill="none" stroke="#555" strokeWidth="1.200">
        <ellipse cx="10" cy="11" rx="9" ry="4" />
        <ellipse cx="10" cy="10" rx="4" ry="9" />
        <path d="M7 10H13M10 7V13" stroke={BLUE} />
        <path d="M13 4L17 6L14 8Z" fill="#333" />
      </svg>
      <Caret className="ml-1.5" />
      <svg viewBox="0 0 18 18" className="ml-1.5 size-[18px]" fill="none" stroke="#555" strokeWidth="1.500">
        <rect x="1" y="6" width="16" height="11" fill="#e4e4e4" />
        <path d="M4 10H14V14H4ZM2 5L6 1V5M7 4L11 2V5" />
      </svg>
      <svg viewBox="0 0 20 20" className="ml-3 size-5" fill="#fff" stroke="#444" strokeWidth="1.200">
        <path d="M7 19C6 16 1 12 1 9.500C2 8.500 4 10 5 11L4 4C5 2.500 6 3 7 8L7.500 2C8.500 0.500 10 1 10 8L11.500 2C12.500 1 14 2 13 9L15.500 5C17 4.500 17 6 16.500 8C16 12 16 15 14 19Z" />
      </svg>
      <svg viewBox="0 0 20 20" className="ml-2.5 size-[19px]" fill="#eef4f4" stroke="#666" strokeWidth="1.200">
        <circle cx="8" cy="8" r="7" />
        <path d="M13 13L18 18" stroke="#333" strokeWidth="3" />
        <path d="M15 3H20M17.500 1V6M15 8H20" />
      </svg>
      <svg viewBox="0 0 20 20" className="ml-3 size-[19px]" fill="#fff" stroke="#666" strokeWidth="1.200">
        <circle cx="8" cy="8" r="7" />
        <rect x="5" y="5" width="6" height="6" />
        <path d="M13 13L18 18" stroke="#333" strokeWidth="3" />
      </svg>
      <Caret className="ml-1" />
      <svg viewBox="0 0 20 18" className="ml-1.5 h-[18px] w-5" stroke="#666">
        <rect x="1" y="1" width="18" height="13" fill="#7da7d8" strokeWidth="1.500" />
        <path d="M10 14V17M5 17.500H15" strokeWidth="2" />
      </svg>
      <Caret className="ml-0.5" />
      <svg viewBox="0 0 18 18" className="ml-2 size-[18px]" stroke="#555" fill="#fff">
        <path d="M1 1H17V17H1ZM4.500 1V17M7.500 1V17M10.500 1V17M13.500 1V17M1 4.500H17M1 7.500H17M1 10.500H17M1 13.500H17" />
      </svg>
      <Caret className="ml-0.5" />
      <svg viewBox="0 0 18 16" className="ml-2 h-4 w-[18px]" stroke="#4b6f9c" fill="#8db0dc">
        <path d="M1 1H17V15H1ZM9 1V15M1 8H17" strokeWidth="1.500" />
      </svg>
      <Caret className="mr-1 ml-0.5" />
    </div>
  );
}

function Canvas() {
  return (
    <main className="relative flex flex-1 flex-col justify-between overflow-hidden">
      <Drawing />
      <div className="relative grid grid-cols-[1fr_auto_1fr] items-start">
        <Browser />
        <div className="mt-1 flex h-7 items-center bg-[#f1f1f1] pl-1.5 text-[#333]">
          <svg viewBox="0 0 14 17" className="mr-2 h-[17px] w-3.5">
            <path d="M3.500 8V5C3.500 0.500 10.500 0.500 10.500 5V8" fill="none" stroke="#dc2323" strokeWidth="2" />
            <rect y="6" width="14" height="11" rx="1" fill="#dc2323" />
            <path d="M7 10V14" stroke="#fff" strokeWidth="1.500" />
          </svg>
          <strong className="mr-6">Read-Only:</strong>
          <span className="mr-4">Document limit has been reached</span>
          <a href="#documents" className="flex h-full items-center border-l-2 border-[#ccc] pr-3 pl-3.5 text-[#126bb0]">
            My Editable Documents
          </a>
        </div>
        <div className="flex flex-col items-end pt-[7px]">
          <ViewCube />
          <div className="mt-1.5">
            <SketchPalette />
          </div>
        </div>
      </div>
      <div className="relative grid grid-cols-[1fr_auto_1fr] items-end pb-1">
        <div className="ml-[5px] flex h-[29px] w-[350px] items-center justify-between border-x border-b-2 border-[#ccc] bg-[#f1f1f1] pr-3 pl-7 text-[#555]">
          COMMENTS
          <FaPlusCircle size={11} color="#222" />
        </div>
        <NavBar />
      </div>

      <ProjectPanel />

      <div className="absolute top-[225px] left-[409px] flex h-[89px] w-[289px] items-center rounded-full bg-[#d00003]/60 pb-1 pl-[26px] font-['Noto_Sans_CJK_KR',sans-serif] text-[39px] font-bold text-white">
        Project 선택
      </div>
      <div className="absolute top-[757px] left-[665px] flex h-[89px] w-[139px] items-center justify-center rounded-full bg-[#00b050]/60 pr-2.5 font-['Noto_Sans_CJK_KR',sans-serif] text-[39px] font-bold text-white">
        선택
      </div>
      <div
        role="tooltip"
        className="absolute top-[331px] left-[601px] h-[196px] w-[388px] rounded-xl bg-[#505050] pt-[34px] pl-[18px] font-['Noto_Sans',sans-serif] text-[14px]/[19px] font-medium text-white"
      >
        <p>
          Projects the body silhouette, edges, work
          <br />
          geometries and sketch curves into the active sketch
          <br />
          plane.
        </p>
        <p className="mt-[18px]">
          Use the selection filter to project specific type of
          <br />
          geometry or the body silhouette.
        </p>
        <p className="mt-[27px]">Press Ctrl+/ for more help.</p>
      </div>
    </main>
  );
}

/* ---------- timeline ---------- */

const sketchFeature = (
  <>
    <path d="M2 2H16V17H2ZM5 5H13C13 10 10 14 6 14Z" fill="none" stroke="#4a86bd" strokeWidth="1.500" />
    <path d="M9 17L11 13L16 8L18 10L13 16Z" fill="#f5a623" />
    <path d="M15 9L17 7L19 9L17 11Z" fill="#d9402c" />
    <Dots points={[[2, 2], [16, 2], [2, 17]]} r={1} />
  </>
);
const extrudeFeature = (
  <>
    <path d="M1 6L5 2H15V15L11 19H1Z" fill="#7ab8e4" />
    <path d="M1 6H11V19M11 6L15 2" fill="none" stroke="#5a9ccc" />
    <path d="M18 3V17" stroke="#555" />
  </>
);
const features: ReactNode[] = [
  sketchFeature,
  <>
    <path d="M2 7L8 2V14L2 18Z" fill="#eee" stroke="#555" />
    <path d="M6 6L12 1V14L6 18Z" fill="#3fc072" stroke="#2c8a50" />
    <path d="M14 6L19 2V14L14 18Z" fill="#e07f3f" />
  </>,
  sketchFeature,
  sketchFeature,
  <>
    <path d="M10 1L15 6L18 11L13 15L8 8L5 6Z" fill="#e8935a" />
    <path d="M2 10L6 8L11 10V15L7 18L2 15Z" fill="#b9c6b9" stroke="#888" />
  </>,
  sketchFeature,
  extrudeFeature,
  extrudeFeature,
  extrudeFeature,
  <g fill="#7ab8e4">
    <circle cx="10" cy="3" r="2.500" />
    <circle cx="16" cy="7" r="2.500" />
    <circle cx="16" cy="13" r="2.500" />
    <circle cx="10" cy="17" r="2.500" />
    <circle cx="4" cy="13" r="2.500" />
    <circle cx="4" cy="7" r="2" fill="none" stroke="#777" />
  </g>,
  <>
    <path d="M4 4H16M4 4V16H16" fill="none" stroke="#555" strokeDasharray="3 1" />
    <Dots points={[[4, 4], [16, 4], [4, 16], [16, 16]]} r={2} />
  </>,
  extrudeFeature,
  extrudeFeature,
  <>
    <path d="M2 6L6 2H18V14L14 18H2Z" fill="#eee" stroke="#777" />
    <path d="M4 9H8V13H13V17H4Z" fill="#4a98d0" />
  </>,
  sketchFeature,
];

const playback = [
  { label: "Go to start", d: "M2 2V18M18 2L5 10L18 18Z" },
  { label: "Step back", d: "M14 3L2 10L14 17ZM15 8H18V12H15Z" },
  { label: "Play", d: "M4 1L18 10L4 19Z" },
  { label: "Step forward", d: "M6 3L18 10L6 17ZM5 8H2V12H5Z" },
  { label: "Go to end", d: "M18 2V18M2 2L15 10L2 18Z" },
];

function Timeline() {
  return (
    <footer className="flex h-[52px] items-start border-t border-[#ccc] bg-[#f1f1f1]">
      <div className="flex w-[169px] gap-[11px] pt-[19px] pl-[11px]">
        {playback.map((p) => (
          <button key={p.label} aria-label={p.label}>
            <svg viewBox="0 0 20 20" className="size-[18px]" fill="#555" stroke="#555">
              <path d={p.d} />
            </svg>
          </button>
        ))}
      </div>
      <div className="flex w-[419px] flex-col pt-2">
        <div className="h-[7px] w-[79px] bg-[#fcaaae]" />
        <div className="mt-[3px] flex">
          {features.map((f, i) => (
            <span key={i} className={"flex w-7 justify-start pl-px " + (i > 2 ? "opacity-35" : "")}>
              <svg viewBox="0 0 20 20" className="h-[19px] w-5">
                {f}
              </svg>
            </span>
          ))}
        </div>
        <div className="mt-[3px] flex border-[#c8c8c8] pl-3">
          {features.slice(1).map((_, i) => (
            <span key={i} className={"h-2 w-7 border-b-2 border-l-2 border-[#c8c8c8] " + (i === 13 ? "border-r-2" : "")} />
          ))}
        </div>
      </div>
      <svg viewBox="0 0 16 38" className="mt-[11px] -ml-2 h-[38px] w-4" fill="#666">
        <path d="M1 0H15V5L9 10V38H7V10L1 5Z" />
      </svg>
      <button aria-label="Timeline settings" className="mt-[19px] mr-4 ml-auto">
        <FaCog size={17} color="#666" />
      </button>
    </footer>
  );
}

export default function App() {
  return (
    <div className="relative flex min-h-screen flex-col overflow-hidden border-x-2 border-black bg-[#f1f1f1] font-['Liberation_Sans',Arial,sans-serif] text-[13px]">
      <div className="h-0.5 bg-[#b0b0b0]" />
      <TitleBar />
      <DocumentBar />
      <Ribbon />
      <div className="h-[5px] bg-[#f1f1f1]" />
      <Canvas />
      <Timeline />
      <div className="h-[7px] border-t-2 border-[#b0b6b8] bg-gradient-to-r from-[#cfe4e6] via-[#e4e9e9] to-[#dfe8ea]" />

      <div className="pointer-events-none absolute top-1/2 left-1/2 z-30 flex h-[135px] w-1/2 -translate-1/2 items-center justify-center bg-[#00a8eb] pb-3 font-['Noto_Sans_CJK_KR',sans-serif] text-[71px] font-bold text-white opacity-31">
        22ww.tistory.com
      </div>
    </div>
  );
}
